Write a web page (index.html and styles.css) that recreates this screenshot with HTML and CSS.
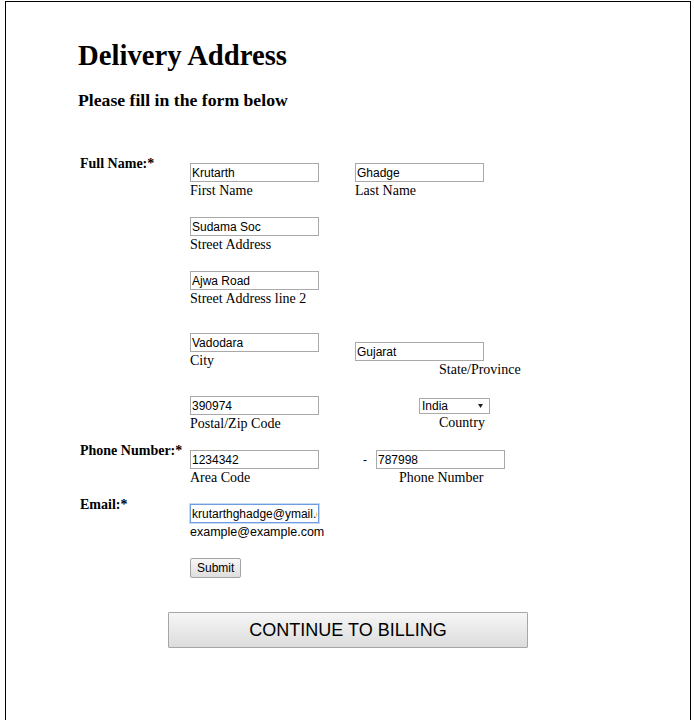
FILE: index.html
```html
<!DOCTYPE html>
<html lang="en">
<head>
<meta charset="utf-8">
<title>Delivery Address</title>
<link rel="stylesheet" href="styles.css">
</head>
<body>
<div class="frame">
  <h1 class="title">Delivery Address</h1>
  <h3 class="subtitle">Please fill in the form below</h3>

  <form class="form" onsubmit="return false">
    <div class="row row-name">
      <div class="label">Full Name:*</div>
      <div class="field field-offset">
        <input class="text-input" type="text" value="Krutarth">
        <span class="hint">First Name</span>
      </div>
      <div class="field field-offset">
        <input class="text-input" type="text" value="Ghadge">
        <span class="hint">Last Name</span>
      </div>
    </div>

    <div class="row row-gap">
      <div class="field col-2">
        <input class="text-input" type="text" value="Sudama Soc">
        <span class="hint">Street Address</span>
      </div>
    </div>

    <div class="row row-gap">
      <div class="field col-2">
        <input class="text-input" type="text" value="Ajwa Road">
        <span class="hint">Street Address line 2</span>
      </div>
    </div>

    <div class="row row-gap-lg">
      <div class="field col-2">
        <input class="text-input" type="text" value="Vadodara">
        <span class="hint">City</span>
      </div>
      <div class="field state-field">
        <input class="text-input" type="text" value="Gujarat">
        <span class="hint hint-state">State/Province</span>
      </div>
    </div>

    <div class="row row-gap">
      <div class="field col-2">
        <input class="text-input" type="text" value="390974">
        <span class="hint">Postal/Zip Code</span>
      </div>
      <div class="field">
        <div class="select">
          <select class="select-box">
            <option>India</option>
          </select>
          <svg class="select-arrow" width="5" height="4" viewBox="0 0 5 4"><path d="M0 0H5L2.5 4Z" fill="#222"/></svg>
        </div>
        <span class="hint hint-country">Country</span>
      </div>
    </div>

    <div class="row row-gap-label">
      <div class="label">Phone Number:*</div>
      <div class="field field-offset">
        <input class="text-input" type="text" value="1234342">
        <span class="hint">Area Code</span>
      </div>
      <div class="field field-offset">
        <div class="phone-line">
          <span class="dash">-</span>
          <input class="text-input phone-input" type="text" value="787998">
        </div>
        <span class="hint hint-phone">Phone Number</span>
      </div>
    </div>

    <div class="row row-gap-label">
      <div class="label">Email:*</div>
      <div class="field field-offset">
        <input class="text-input is-focused" type="text" value="krutarthghadge@ymail.com">
        <span class="hint-sans">example@example.com</span>
      </div>
    </div>

    <div class="row row-submit">
      <div class="field col-2">
        <button class="submit-btn" type="button">Submit</button>
      </div>
    </div>
  </form>

  <div class="continue-wrap">
    <button class="continue-btn" type="button">CONTINUE TO BILLING</button>
  </div>
</div>
</body>
</html>
```

FILE: styles.css
```css
* {
  box-sizing: border-box;
}

html,
body {
  margin: 0;
  padding: 0;
}

body {
  font-family: "Liberation Serif", "Times New Roman", serif;
  font-size: 14px;
  color: #000;
  background: #fff;
}

.frame {
  margin: 1px 0 0 5px;
  width: 686px;
  min-height: 719px;
  border: 1px solid #000;
  border-bottom: none;
}

.title {
  margin: 37px 0 0 72px;
  font-size: 28.7px;
  line-height: 32px;
  font-weight: bold;
}

.subtitle {
  margin: 19px 0 0 72px;
  font-size: 17.7px;
  line-height: 21px;
  font-weight: bold;
}

.form {
  margin: 45px 0 0 0;
  padding-left: 74px;
}

.row {
  display: grid;
  grid-template-columns: 110px 165px 1fr;
  align-items: start;
}

.row-gap {
  margin-top: 19px;
}

.row-gap-lg {
  margin-top: 27px;
}

.row-gap-label {
  margin-top: 12px;
}

.row-submit {
  margin-top: 18px;
}

.label {
  font-weight: bold;
  line-height: 16px;
}

.field {
  display: flex;
  flex-direction: column;
  align-items: flex-start;
}

.col-2 {
  grid-column: 2;
}

.field-offset {
  padding-top: 7px;
}

.state-field {
  padding-top: 9px;
}

.hint {
  line-height: 16px;
  padding-top: 1px;
  margin-bottom: -1px;
}

.hint-state,
.hint-country {
  margin-left: 84px;
}

.hint-phone {
  margin-left: 44px;
}

.hint-sans {
  padding-top: 2px;
  font-family: "Liberation Sans", Arial, sans-serif;
  font-size: 12.5px;
  line-height: 15px;
}

.text-input {
  width: 129px;
  height: 19px;
  margin: 0;
  padding: 0 1px;
  border: 1px solid #a9a9a9;
  border-radius: 0;
  background: #fff;
  color: #000;
  font-family: "Liberation Sans", Arial, sans-serif;
  font-size: 12px;
  outline: none;
}

.text-input.is-focused {
  border-color: #6f9ddf;
  box-shadow: 0 0 0 1px #c6daf5;
}

.select {
  position: relative;
  width: 71px;
  height: 16px;
  margin: 2px 0 0 64px;
}

.select-box {
  appearance: none;
  -webkit-appearance: none;
  display: block;
  width: 100%;
  height: 100%;
  margin: 0;
  padding: 0 0 0 2px;
  border: 1px solid #a9a9a9;
  border-radius: 0;
  background: #fff;
  color: #000;
  font-family: "Liberation Sans", Arial, sans-serif;
  font-size: 12px;
  line-height: 14px;
}

.select-arrow {
  position: absolute;
  left: 59px;
  top: 6px;
  pointer-events: none;
}

.phone-line {
  display: flex;
  align-items: center;
}

.dash {
  margin-left: 8px;
  font-family: "Liberation Sans", Arial, sans-serif;
  font-size: 12px;
}

.phone-input {
  margin-left: 9px;
}

.submit-btn {
  height: 20px;
  margin: 0;
  padding: 0 6px;
  border: 1px solid #a3a3a3;
  border-radius: 2px;
  background: linear-gradient(#f7f7f7, #dedede);
  color: #000;
  font-family: "Liberation Sans", Arial, sans-serif;
  font-size: 12px;
  line-height: 16px;
}

.continue-wrap {
  display: flex;
  justify-content: center;
  margin-top: 34px;
}

.continue-btn {
  width: 360px;
  height: 36px;
  margin: 0;
  padding: 0;
  border: 1px solid #a6a6a6;
  border-radius: 1px;
  background: linear-gradient(#f6f6f6, #dcdcdc);
  color: #000;
  font-family: "Liberation Sans", Arial, sans-serif;
  font-size: 18px;
}
```
